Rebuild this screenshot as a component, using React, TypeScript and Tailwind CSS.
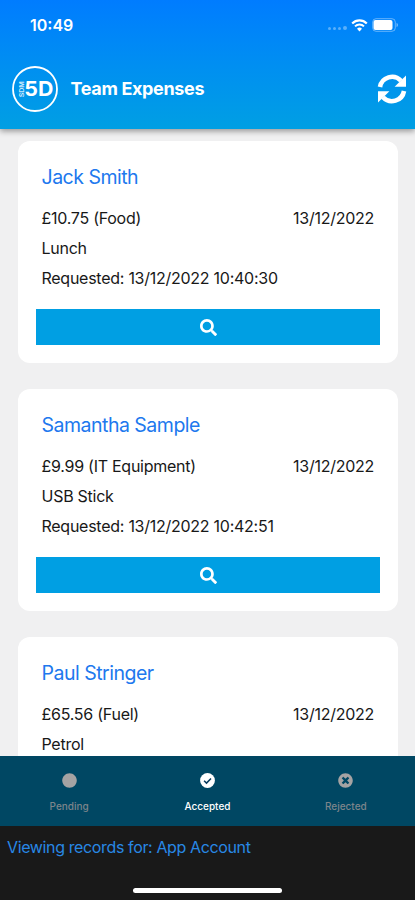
import React from "react";
import { FaCircle, FaSearch, FaTimesCircle } from "react-icons/fa";

type Expense = {
  name: string;
  amount: string;
  date: string;
  item: string;
  requested?: string;
};

const expenses: Expense[] = [
  { name: "Jack Smith", amount: "£10.75 (Food)", date: "13/12/2022", item: "Lunch", requested: "13/12/2022 10:40:30" },
  { name: "Samantha Sample", amount: "£9.99 (IT Equipment)", date: "13/12/2022", item: "USB Stick", requested: "13/12/2022 10:42:51" },
  { name: "Paul Stringer", amount: "£65.56 (Fuel)", date: "13/12/2022", item: "Petrol" },
];

function Wifi() {
  return (
    <svg width="17" height="13" viewBox="0 0 17 13" fill="none" stroke="white">
      <path d="M1.2 4.5a10.3 10.3 0 0 1 14.6 0" strokeWidth="2.2" />
      <path d="M4 7.4a6.3 6.3 0 0 1 9 0" strokeWidth="2" />
      <path d="M8.5 12.4 6 9.8a3.6 3.6 0 0 1 5 0z" fill="white" stroke="none" />
    </svg>
  );
}

function Battery() {
  return (
    <svg width="28" height="14" viewBox="0 0 28 14" fill="none">
      <rect x="0.7" y="0.7" width="22.6" height="12.6" rx="3.4" stroke="white" strokeOpacity="0.4" />
      <rect x="1.5" y="2" width="19" height="10" rx="2" fill="white" />
      <path d="M24.6 4.8v4.4c1.8-.9 1.8-3.5 0-4.4z" fill="white" fillOpacity="0.5" />
    </svg>
  );
}

function Refresh() {
  return (
    <svg className="ml-auto" width="30" height="30" viewBox="0 0 30 30" fill="none" stroke="white" strokeWidth="4.6">
      <path d="M3 13A12.2 12.2 0 0 1 24 6.8" />
      <path d="M27 17A12.2 12.2 0 0 1 6 23.2" />
      <path d="M29 1.5v11.3H17.6z" fill="white" stroke="none" />
      <path d="M1 28.5V17.2h11.4z" fill="white" stroke="none" />
    </svg>
  );
}

function CheckBadge() {
  return (
    <svg width="15" height="15" viewBox="0 0 15 15" fill="none">
      <circle cx="7.5" cy="7.5" r="7.4" fill="white" />
      <path d="m4.1 7.7 2.4 2.4 4.5-4.6" stroke="#063a5c" strokeWidth="1.5" />
    </svg>
  );
}

function Logo() {
  return (
    <svg width="46" height="46" viewBox="0 0 46 46" fill="white" fontFamily="Inter, sans-serif">
      <circle cx="23" cy="23" r="22" fill="none" stroke="white" strokeWidth="1.8" />
      <text x="12.3" y="30.2" fontSize="20.5" fontWeight="700" textLength="29" lengthAdjust="spacingAndGlyphs">5D</text>
      <text transform="translate(11.6 31.3) rotate(-90)" fontSize="6" fontWeight="700" fillOpacity="0.8" textLength="16" lengthAdjust="spacingAndGlyphs">SDM</text>
    </svg>
  );
}

function Card({ expense }: { expense: Expense }) {
  return (
    <article className="flex h-[222px] shrink-0 flex-col rounded-xl bg-white px-[18px] pt-[21px] pb-[18px]">
      <div className="pr-1.5 pl-[5.5px]">
        <h2 className="h-[30px] text-[19.5px] leading-[30px] tracking-[-0.5px] text-[#2078ee]">{expense.name}</h2>
        <div className="mt-[11px] text-[16px] leading-[30px] tracking-[-0.26px] text-[#181818]">
          <div className="flex justify-between">
            <span>{expense.amount}</span>
            <span>{expense.date}</span>
          </div>
          <p>{expense.item}</p>
          {expense.requested && <p>Requested: {expense.requested}</p>}
        </div>
      </div>
      <button className="mt-auto flex h-9 w-full items-center justify-center bg-[#009fe3] text-white">
        <FaSearch size={17} />
      </button>
    </article>
  );
}

export default function App() {
  return (
    <div className="flex h-[900px] w-[415px] flex-col overflow-hidden bg-[#f0f0f1] font-['Inter',sans-serif]">
      <header className="z-10 h-[129px] shrink-0 bg-linear-to-b from-[#007cff] to-[#009fe3] text-white shadow-[0_2px_6px_rgba(0,0,0,0.4)]">
        <div className="flex h-[50px] items-center justify-between pr-[15px] pl-[30px]">
          <span className="text-[16px] leading-5 font-semibold">10:49</span>
          <div className="flex items-center">
            <div className="mt-1.5 mr-1 flex items-end gap-[2px] opacity-35">
              <i className="size-[3px] rounded-full bg-white" />
              <i className="size-[3px] rounded-full bg-white" />
              <i className="size-[3px] rounded-full bg-white" />
              <i className="size-[4px] rounded-full bg-white" />
            </div>
            <Wifi />
            <div className="ml-1"><Battery /></div>
          </div>
        </div>
        <div className="flex h-[78px] items-center pr-[8px] pl-3">
          <Logo />
          <h1 className="ml-[12.5px] text-[18px] leading-6 font-bold tracking-[-0.35px]">Team Expenses</h1>
          <Refresh />
        </div>
      </header>
      <main className="flex h-[627px] shrink-0 flex-col gap-[26px] overflow-hidden pt-3 pr-[17px] pl-[18px]">
        {expenses.map((expense) => <Card key={expense.name} expense={expense} />)}
      </main>
      <nav className="grid h-[70px] shrink-0 grid-cols-3 bg-[#004763] text-[10px] leading-3 font-medium text-[#7c858b]">
        <div className="flex flex-col items-center gap-[12px] pt-[17px]"><FaCircle size={15} className="text-[#a5a3a3]" /><span>Pending</span></div>
        <div className="flex flex-col items-center gap-[12px] pt-[17px] text-white"><CheckBadge /><span>Accepted</span></div>
        <div className="flex flex-col items-center gap-[12px] pt-[17px]"><FaTimesCircle size={15} className="text-[#a5a3a3]" /><span>Rejected</span></div>
      </nav>
      <footer className="flex h-[74px] shrink-0 flex-col bg-[#191919]">
        <p className="h-[42px] pl-[7px] text-[16px] leading-[42px] tracking-[-0.37px] text-[#2888e5]">Viewing records for: App Account</p>
        <div className="mx-auto mt-5 h-[5px] w-[149px] rounded-full bg-white" />
      </footer>
    </div>
  );
}
